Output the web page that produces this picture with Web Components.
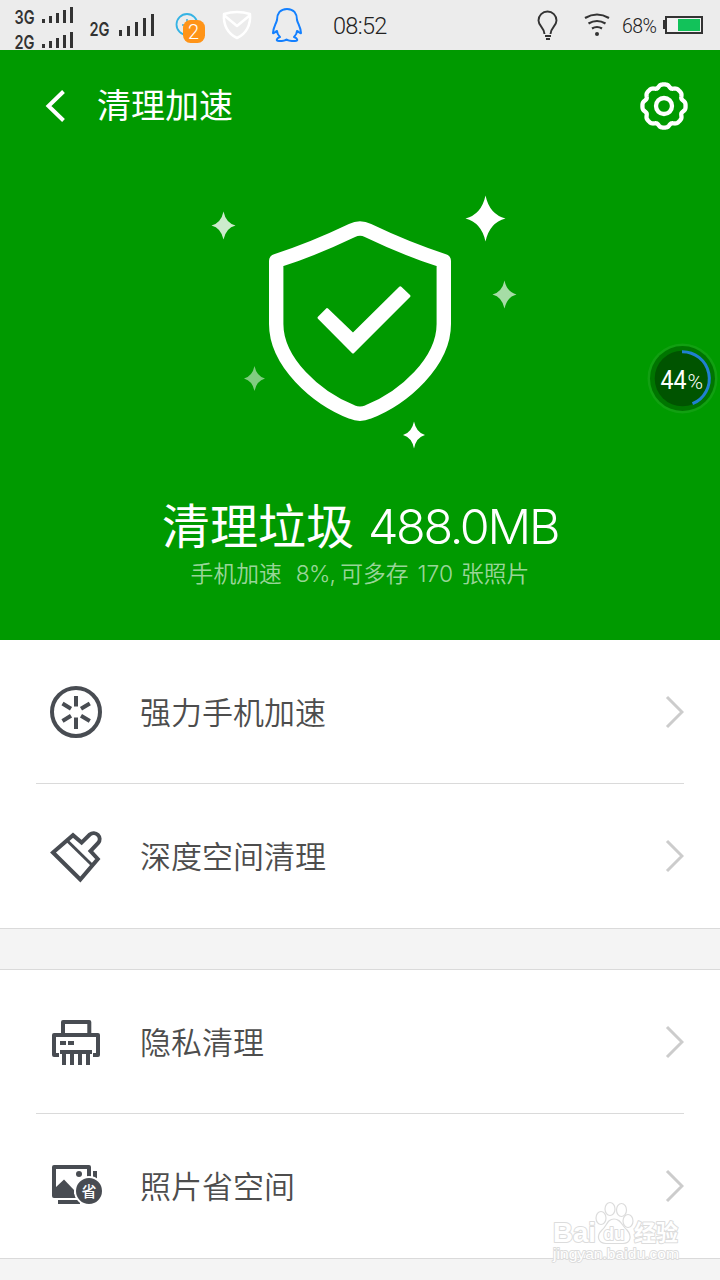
<!DOCTYPE html>
<html lang="zh-CN">
<head>
<meta charset="utf-8">
<title>清理加速</title>
<style>
  body {
    margin: 0;
    background: #f4f4f4;
    font-family: "Noto Sans CJK SC", sans-serif;
  }
</style>
</head>
<body>
<cleaner-app></cleaner-app>

<script>
class StatusBar extends HTMLElement {
  constructor() {
    super();
    this.attachShadow({mode: 'open'});
  }

  connectedCallback() {
    this.shadowRoot.innerHTML = `
    <style>
      :host {
        display: flex;
        height: 50px;
        background: #ececec;
        color: #222;
        font-family: Roboto, sans-serif;
        font-weight: 300;
      }
      svg {
        display: block;
        flex: none;
        overflow: visible;
      }
      .side {
        display: flex;
        align-items: center;
      }
      .right {
        margin-left: auto;
        padding-right: 17px;
      }
      .time {
        width: 56px;
        margin-left: 30px;
        padding-top: 4px;
        font-size: 23.5px;
        line-height: 1;
        letter-spacing: -0.7px;
      }
      .percent {
        width: 37px;
        margin: 3px 4px 0 11px;
        font-size: 19.5px;
        line-height: 1;
        letter-spacing: -0.6px;
      }
      .net {
        font-family: Inter, sans-serif;
        font-weight: 600;
        font-size: 19px;
      }
      .badge {
        font-size: 20px;
      }
    </style>
    <div class="side">
      <svg width="160" height="50" fill="#333">
        <g class="net">
          <text x="14.500" y="24" textLength="20" lengthAdjust="spacingAndGlyphs">3G</text>
          <text x="14.500" y="49" textLength="20" lengthAdjust="spacingAndGlyphs">2G</text>
          <text x="89.500" y="36" textLength="20" lengthAdjust="spacingAndGlyphs">2G</text>
        </g>
        <path d="M42 19h3v4h-3zM49 16h3v7h-3zM56 13h3v10h-3zM63 10h3v13h-3zM70 7h3v16h-3z"/>
        <path d="M42 44h3v4h-3zM49 41h3v7h-3zM56 38h3v10h-3zM63 35h3v13h-3zM70 32h3v16h-3z"/>
        <path d="M119 30h3v6h-3zM127 26h3v10h-3zM135 22h3v14h-3zM143 18h3v18h-3zM151 14h3v22h-3z"/>
      </svg>
      <svg width="50" height="50" viewBox="160 0 50 50">
        <circle cx="187" cy="24.500" r="10.500" fill="none" stroke="#35b3e4" stroke-width="1.800"/>
        <path d="M182 25h4M187 19v5" stroke="#35b3e4" stroke-width="1.500"/>
        <rect x="183" y="20" width="22" height="23" rx="7.500" fill="#ff9418"/>
        <text class="badge" x="193.500" y="38.500" text-anchor="middle" fill="#fff">2</text>
      </svg>
      <svg width="50" height="50" viewBox="210 0 50 50" fill="none" stroke="#fff" stroke-width="2.500" stroke-linejoin="round" stroke-linecap="round">
        <path d="M224 14Q237 10 250 14C251 25 246 34 237 38C228 34 223 25 224 14Z"/>
        <path d="M225 16L237 26L249 16"/>
      </svg>
      <svg width="43" height="50" viewBox="260 0 43 50" fill="none" stroke="#1380ff" stroke-width="2" stroke-linejoin="round">
        <path d="M287 9C280 9 277 14 277 20C276 24 273 28 273 33C274 34 275 32 277 31C277 34 279 36 280 37C277 38 275 41 279 41C282 41 285 41 286.500 39.500C288 41 292 41 295 41C299 41 297 38 294 37C295 36 297 34 297 31C299 32 300 34 301 33C301 28 298 24 297 20C297 14 294 9 287 9Z"/>
      </svg>
      <span class="time">08:52</span>
    </div>
    <div class="side right">
      <svg width="75" height="50" viewBox="536 0 75 50" fill="none" stroke="#333">
        <path d="M544.500 34C544.500 28 538.500 26 538.500 20.500A9 9 0 0 1 556.500 20.500C556.500 26 550.500 28 550.500 34" stroke-width="1.900"/>
        <path d="M545 36h6M546 39h4" stroke-width="2"/>
        <path d="M585 18Q597 11 609 18M588.500 23.500Q597 18.500 605.500 23.500M592 28.500Q597 25.500 602 28.500" stroke-width="2.200"/>
        <circle cx="597" cy="34" r="2" fill="#333" stroke="none"/>
      </svg>
      <span class="percent">68%</span>
      <svg width="40" height="50" viewBox="663 0 40 50">
        <path d="M663 20h3v9h-3z" fill="#333"/>
        <rect x="666" y="17" width="36" height="16" fill="#f2f2f2" stroke="#333" stroke-width="2"/>
        <path d="M678 19h22v12h-22z" fill="#12c25a"/>
      </svg>
    </div>
    `;
  }
}
customElements.define('status-bar', StatusBar);

class TitleBar extends HTMLElement {
  constructor() {
    super();
    this.attachShadow({mode: 'open'});
  }

  // gear outline with eight soft lobes
  gearPath() {
    const points = [];
    for (let i = 0; i < 160; i++) {
      const a = i / 160 * Math.PI * 2;
      const r = 20.6 + 1.35 * Math.cos(8 * a) - 0.4 * Math.cos(16 * a);
      points.push(`${(24 + r * Math.cos(a)).toFixed(2)} ${(24 + r * Math.sin(a)).toFixed(2)}`);
    }
    return `M${points.join('L')}Z`;
  }

  connectedCallback() {
    this.shadowRoot.innerHTML = `
    <style>
      :host {
        display: flex;
        align-items: center;
        box-sizing: border-box;
        height: 112px;
        padding: 0 32px 0 44px;
      }
      h1 {
        flex: 1;
        margin: 0 0 4px 29px;
        font-size: 34px;
        line-height: 48px;
        font-weight: 400;
      }
      svg {
        display: block;
      }
    </style>
    <svg width="24" height="40" fill="none" stroke="#fff" stroke-width="4"><path d="M19.500 5.500L4.500 20L19.500 34.500"/></svg>
    <h1><slot></slot></h1>
    <svg width="48" height="48" fill="none" stroke="#fff" stroke-width="4.300" stroke-linejoin="round">
      <path d="${this.gearPath()}"/>
      <circle cx="24" cy="24" r="8"/>
    </svg>
    `;
  }
}
customElements.define('title-bar', TitleBar);

class ShieldBadge extends HTMLElement {
  constructor() {
    super();
    this.attachShadow({mode: 'open'});
  }

  star(x, y, w, h, opacity) {
    const cx = w * 0.2;
    const cy = h * 0.18;
    return `<path transform="translate(${x} ${y})" opacity="${opacity}" d="M0 ${-h}Q${cx} ${-cy} ${w} 0Q${cx} ${cy} 0 ${h}Q${-cx} ${cy} ${-w} 0Q${-cx} ${-cy} 0 ${-h}Z"/>`;
  }

  connectedCallback() {
    this.shadowRoot.innerHTML = `
    <style>
      :host {
        display: flex;
        justify-content: center;
      }
    </style>
    <svg width="330" height="280" viewBox="195 180 330 280" fill="#fff">
      <path fill="none" stroke="#fff" stroke-width="14.400" stroke-linejoin="round" d="M276.200 261C300 253.500 329 241.500 352 230.500Q360 226.500 368 230.500C391 241.500 420 253.500 443.800 261V324C443.800 362 404 398 368 412Q360 415.500 352 412C316 398 276.200 362 276.200 324Z"/>
      <path stroke="#fff" stroke-width="3" stroke-linejoin="round" d="M319 317.700L327 309.700L353 334.500L400.300 287.800L409 296L353 352Z"/>
      ${this.star(223.5, 225.5, 12, 14, 0.8)}
      ${this.star(485.5, 218.5, 20, 23, 1)}
      ${this.star(504.5, 294.5, 12, 14, 0.65)}
      ${this.star(254.5, 378.5, 10.5, 12.5, 0.5)}
      ${this.star(414, 435, 11, 13.5, 1)}
    </svg>
    `;
  }
}
customElements.define('shield-badge', ShieldBadge);

class CleanSummary extends HTMLElement {
  constructor() {
    super();
    this.attachShadow({mode: 'open'});
  }

  connectedCallback() {
    this.shadowRoot.innerHTML = `
    <style>
      :host {
        display: flex;
        flex-direction: column;
        align-items: center;
        padding-top: 31px;
        white-space: pre;
      }
      .total {
        display: flex;
        align-items: baseline;
        gap: 14px;
        height: 66px;
        line-height: 64px;
        font-size: 48px;
      }
      .size {
        font: 280 48.500px/64px Inter, sans-serif;
        letter-spacing: -2.3px;
      }
      .detail {
        display: flex;
        align-items: baseline;
        height: 32px;
        line-height: 32px;
        font-size: 22.800px;
        font-weight: 350;
        color: rgba(255, 255, 255, 0.62);
      }
      .num {
        font-family: Inter, sans-serif;
        font-weight: 300;
        letter-spacing: 0;
      }
      .rate {
        margin: 0 5px 0 14px;
        letter-spacing: -0.8px;
      }
      .count {
        margin: 0 8px 0 9px;
      }
    </style>
    <div class="total"><span>清理垃圾</span><span class="size">488.0MB</span></div>
    <div class="detail"><span>手机加速</span><span class="num rate">8%,</span><span>可多存</span><span class="num count">170</span><span>张照片</span></div>
    `;
  }
}
customElements.define('clean-summary', CleanSummary);

class MemoryBubble extends HTMLElement {
  constructor() {
    super();
    this.attachShadow({mode: 'open'});
  }

  connectedCallback() {
    this.shadowRoot.innerHTML = `
    <style>
      :host {
        position: absolute;
        top: 342px;
        left: 646px;
        width: 74px;
        height: 74px;
        font-family: Roboto, sans-serif;
      }
    </style>
    <svg width="74" height="74" viewBox="646 342 74 74">
      <circle cx="682.500" cy="378.500" r="35" fill="#18a218" opacity=".7"/>
      <circle cx="682.500" cy="378.500" r="32.500" fill="#007500"/>
      <circle cx="682.500" cy="378.500" r="27.800" fill="#005400"/>
      <path d="M682 351.700A27 27 0 0 1 692.500 403.700" fill="none" stroke="#2080d0" stroke-width="3"/>
      <text x="660.500" y="388.500" font-size="25.500" fill="#fff" textLength="26" lengthAdjust="spacingAndGlyphs">44</text>
      <text x="687.500" y="389" font-size="19.500" font-weight="300" fill="#fff" textLength="15.500" lengthAdjust="spacingAndGlyphs">%</text>
    </svg>
    `;
  }
}
customElements.define('memory-bubble', MemoryBubble);

const rowIcons = {
  boost: `
    <circle cx="26" cy="26" r="24" stroke-width="4"/>
    <path stroke-width="4" d="M26 10v10.500M26 31.500V43M12.500 17.500L21 22.800M39.800 17.500L31 22.800M12.500 35L21 29.800M39.800 35L31 29.800"/>`,
  brush: `
    <path stroke-width="4" d="M3 22.500L23 5.200L31.600 12.600L39.800 4.500A6 6 0 0 1 48.200 13L40.500 21L47.800 29L30.300 49.500Z"/>
    <path stroke-width="3" d="M17 10.500L42 35"/>`,
  shredder: `
    <path stroke-width="4" stroke-linejoin="round" d="M13 19V6H39.300V19M9 39H4V19H48V39H43"/>
    <path stroke-width="4" d="M10 36H42M14 36V49M22 36V49M30 36V49M38 36V49M10 27H16M18 27H24"/>`,
  photo: `
    <path stroke-width="4" d="M45 11V20M8 42H30"/>
    <rect x="4" y="7" width="35" height="29" stroke-width="4" stroke-linejoin="round"/>
    <path d="M5 28L14 19.500L24 30V36H5Z" fill="#484c52" stroke="none"/>
    <circle cx="29" cy="14" r="3" fill="#484c52" stroke="none"/>
    <circle cx="39" cy="31" r="14" fill="#484c52" stroke="#fff" stroke-width="2"/>
    <text x="39" y="36.500" font-size="15" font-weight="500" text-anchor="middle" fill="#fff" stroke="none">省</text>`
};

class MenuRow extends HTMLElement {
  constructor() {
    super();
    this.attachShadow({mode: 'open'});
  }

  connectedCallback() {
    this.shadowRoot.innerHTML = `
    <style>
      :host {
        display: flex;
        align-items: center;
        box-sizing: border-box;
        height: 144px;
        margin: 0 36px;
        padding-left: 14px;
      }
      :host(:not(:last-of-type)) {
        padding-top: 1px;
        border-bottom: 1px solid #dadada;
      }
      .icon {
        flex: none;
        fill: none;
        stroke: #484c52;
      }
      .label {
        flex: 1;
        margin: 0 0 3px 38px;
        color: #4d4d4d;
        font-size: 31px;
        line-height: 46px;
        font-weight: 350;
      }
    </style>
    <svg class="icon" width="52" height="54" viewBox="0 -1 52 54">${rowIcons[this.getAttribute('icon')]}</svg>
    <span class="label"><slot></slot></span>
    <svg width="20" height="34" fill="none" stroke="#ccc" stroke-width="3"><path d="M3 2L18 17L3 32"/></svg>
    `;
  }
}
customElements.define('menu-row', MenuRow);

class MenuGroup extends HTMLElement {
  constructor() {
    super();
    this.attachShadow({mode: 'open'});
  }

  connectedCallback() {
    this.shadowRoot.innerHTML = `
    <style>
      :host {
        display: block;
        background: #fff;
        border-bottom: 1px solid #dadada;
      }
      :host([spaced]) {
        margin-top: 40px;
        border-top: 1px solid #dadada;
      }
    </style>
    <slot></slot>
    `;
  }
}
customElements.define('menu-group', MenuGroup);

class SiteMark extends HTMLElement {
  constructor() {
    super();
    this.attachShadow({mode: 'open'});
  }

  connectedCallback() {
    this.shadowRoot.innerHTML = `
    <style>
      :host {
        position: absolute;
        top: 1196px;
        left: 546px;
        width: 140px;
        height: 72px;
        font-family: "Liberation Sans", "Noto Sans CJK SC", sans-serif;
      }
      text {
        font-weight: 700;
        paint-order: stroke;
      }
      .url {
        font-weight: 400;
      }
    </style>
    <svg width="140" height="72" viewBox="546 1196 140 72" fill="#fff" stroke="#dcdcdc" stroke-width="2" stroke-linejoin="round">
      <text x="553" y="1242" font-size="28" textLength="43" lengthAdjust="spacingAndGlyphs">Bai</text>
      <g stroke-width="1.200">
        <ellipse cx="601" cy="1218" rx="5" ry="6.500"/>
        <ellipse cx="610" cy="1209" rx="5" ry="6.500"/>
        <ellipse cx="621.500" cy="1210" rx="5" ry="6.500"/>
        <ellipse cx="628" cy="1221" rx="5" ry="6.500"/>
        <path d="M614 1219C607 1219 607 1226 602 1230C596 1236 598 1243 606 1243.500H623C631 1243 632 1236 627 1230C622 1226 621 1219 614 1219Z"/>
      </g>
      <text x="603.500" y="1240" font-size="19" textLength="21" lengthAdjust="spacingAndGlyphs">du</text>
      <text x="634" y="1241" font-size="23" textLength="44" lengthAdjust="spacingAndGlyphs">经验</text>
      <text class="url" x="553" y="1259" font-size="15" stroke-width="1.800" textLength="126" lengthAdjust="spacingAndGlyphs">jingyan.baidu.com</text>
    </svg>
    `;
  }
}
customElements.define('site-mark', SiteMark);

class CleanerApp extends HTMLElement {
  constructor() {
    super();
    this.attachShadow({mode: 'open'});
  }

  connectedCallback() {
    this.shadowRoot.innerHTML = `
    <style>
      :host {
        display: block;
        position: relative;
        width: 720px;
        height: 1280px;
        overflow: hidden;
        background: #f4f4f4;
      }
      .hero {
        height: 590px;
        background: #009a00;
        color: #fff;
      }
      shield-badge {
        margin-top: 18px;
      }
    </style>
    <status-bar></status-bar>
    <section class="hero">
      <title-bar>清理加速</title-bar>
      <shield-badge></shield-badge>
      <clean-summary></clean-summary>
    </section>
    <menu-group>
      <menu-row icon="boost">强力手机加速</menu-row>
      <menu-row icon="brush">深度空间清理</menu-row>
    </menu-group>
    <menu-group spaced>
      <menu-row icon="shredder">隐私清理</menu-row>
      <menu-row icon="photo">照片省空间</menu-row>
    </menu-group>
    <memory-bubble></memory-bubble>
    <site-mark></site-mark>
    `;
  }
}
customElements.define('cleaner-app', CleanerApp);
</script>
</body>
</html>
